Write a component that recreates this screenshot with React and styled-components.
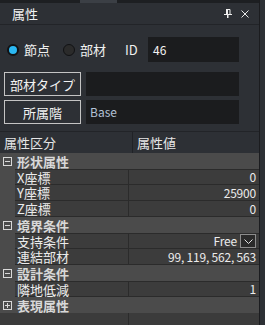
import React from "react";
import styled, { createGlobalStyle } from "styled-components";

const Global = createGlobalStyle`
  html, body { margin: 0; padding: 0; background: #2d3035; }
  * { box-sizing: border-box; }
  body { font-family: "Noto Sans CJK JP", "Noto Sans", sans-serif; line-height: 1; }
`;

const Frame = styled.div`
  width: 265px;
  height: 325px;
  display: flex;
  background: #2d3035;
  overflow: hidden;
`;

const Panel = styled.div`
  width: 259px;
  display: flex;
  flex-direction: column;
`;

const EdgeLine = styled.div`
  width: 1px;
  background: #1b1c1f;
`;

const EdgeStrip = styled.div`
  flex: 1;
  background: #2d3035;
`;

const TopStrip = styled.div`
  height: 3px;
  background: #1d1f22;
  padding-left: 80px;
`;

const TabMark = styled.div`
  width: 37px;
  height: 3px;
  background: #3b3f45;
`;

const TitleBar = styled.div`
  height: 22px;
  display: flex;
  align-items: center;
  padding: 0 10px 0 12px;
  border-bottom: 1px solid #222428;
  color: #f2f2f2;
  font-size: 13px;
`;

const Title = styled.span`
  flex: 1;
`;

const TitleIcons = styled.div`
  display: flex;
  gap: 9px;
  align-items: center;
`;

const Body = styled.div`
  padding: 12px 0 0 0;
  display: flex;
  flex-direction: column;
`;

const RadioRow = styled.div`
  display: flex;
  align-items: center;
  height: 25px;
  padding-left: 7px;
  color: #f0f0f0;
  font-size: 13px;
`;

const RadioLabel = styled.label`
  display: flex;
  align-items: center;
  gap: 5px;
  width: ${(p) => p.$w}px;
`;

const RadioDot = styled.span`
  width: 12px;
  height: 12px;
  border-radius: 50%;
  background: ${(p) => (p.$on ? "#2bb8f2" : "#2b2b2b")};
  border: ${(p) => (p.$on ? "2px" : "1px")} solid #111214;
`;

const IdLabel = styled.span`
  width: 23px;
`;

const Field = styled.div`
  width: ${(p) => p.$w}px;
  height: ${(p) => p.$h}px;
  background: #1b1c1e;
  color: ${(p) => p.$color || "#f4f4f4"};
  font-size: 12px;
  display: flex;
  align-items: center;
  padding-left: ${(p) => p.$pad}px;
`;

const ButtonRow = styled.div`
  display: flex;
  gap: 5px;
  padding-left: 4px;
  margin-top: ${(p) => p.$mt}px;
`;

const Button = styled.div`
  width: 77px;
  height: 24px;
  border: 1px solid #c4c4c4;
  color: #f2f2f2;
  font-size: 13px;
  display: flex;
  align-items: center;
  justify-content: center;
`;

const Grid = styled.div`
  margin-top: 7px;
  border-top: 1px solid #222428;
  display: flex;
  flex-direction: column;
  flex: 1;
`;

const Header = styled.div`
  height: 21px;
  display: grid;
  grid-template-columns: 132px 1px 1fr;
  color: #e6e6e6;
  font-size: 13px;
  align-items: center;
`;

const HeaderCell = styled.span`
  padding-left: 4px;
`;

const HeaderDivider = styled.div`
  align-self: stretch;
  background: #202226;
`;

const GroupRow = styled.div`
  height: 16px;
  flex-shrink: 0;
  display: flex;
  align-items: center;
  gap: 2px;
  background: #4b4b4b;
  color: #d8d8d8;
  font-weight: bold;
  font-size: 13px;
`;

const Toggle = styled.span`
  width: 15px;
  display: flex;
  justify-content: center;
`;

const PropRow = styled.div`
  height: 16px;
  flex-shrink: 0;
  display: flex;
  background: #4b4b4b;
`;

const Margin = styled.div`
  width: 15px;
`;

const Cells = styled.div`
  flex: 1;
  display: grid;
  grid-template-columns: 113px 1fr;
  column-gap: 1px;
  background: #2b2b2b;
  padding-top: ${(p) => (p.$first ? 1 : 0)}px;
  padding-bottom: 1px;
`;

const NameCell = styled.div`
  background: #3c3c3c;
  color: #ececec;
  font-size: 13px;
  padding-left: 2px;
  display: flex;
  align-items: center;
`;

const ValueCell = styled.div`
  background: #3c3c3c;
  color: #ececec;
  font-size: 12px;
  padding-right: 3px;
  display: flex;
  align-items: center;
  justify-content: flex-end;
  gap: 3px;
  letter-spacing: -0.2px;
`;

const Combo = styled.span`
  width: 16px;
  height: 14px;
  border: 1px solid #8c8c8c;
  background: #2a2a2a;
  display: flex;
  align-items: center;
  justify-content: center;
`;

const Filler = styled.div`
  flex: 1;
  display: grid;
  grid-template-columns: 128px 1px 1fr;
  background: #3b3b3b;
`;

const FillerLine = styled.div`
  background: #2b2b2b;
`;

const PinIcon = () => (
  <svg width="8" height="9" viewBox="0 0 8 9">
    <path d="M2 0.5H6V5M2.5 0.5V5" stroke="#f0f0f0" strokeWidth="1" fill="none" />
    <rect x="2" y="1" width="2" height="4" fill="#f0f0f0" />
    <rect x="0" y="5" width="8" height="1" fill="#f0f0f0" />
    <rect x="3" y="6" width="1.5" height="3" fill="#f0f0f0" />
  </svg>
);

const CloseIcon = () => (
  <svg width="8" height="8" viewBox="0 0 8 8">
    <path d="M0.5 0.5L7.5 7.5M7.5 0.5L0.5 7.5" stroke="#e8e8e8" strokeWidth="1" />
  </svg>
);

const BoxIcon = ({ open }) => (
  <svg width="9" height="9" viewBox="0 0 9 9">
    <rect x="0.5" y="0.5" width="8" height="8" fill="none" stroke="#d8d8d8" />
    <rect x="2" y="4" width="5" height="1" fill="#d8d8d8" />
    {!open && <rect x="4" y="2" width="1" height="5" fill="#d8d8d8" />}
  </svg>
);

const Chevron = () => (
  <svg width="9" height="5" viewBox="0 0 9 5">
    <path d="M0.5 0.5L4.5 4.5L8.5 0.5" stroke="#e0e0e0" fill="none" />
  </svg>
);

const rows = [
  { group: "形状属性", open: true },
  { name: "X座標", value: "0" },
  { name: "Y座標", value: "25900" },
  { name: "Z座標", value: "0" },
  { group: "境界条件", open: true },
  { name: "支持条件", value: "Free", combo: true },
  { name: "連結部材", value: "99, 119, 562, 563" },
  { group: "設計条件", open: true },
  { name: "隣地低減", value: "1" },
  { group: "表現属性", open: false },
];

export default function App() {
  return (
    <>
      <Global />
      <Frame>
        <Panel>
          <TopStrip>
            <TabMark />
          </TopStrip>
          <TitleBar>
            <Title>属性</Title>
            <TitleIcons>
              <PinIcon />
              <CloseIcon />
            </TitleIcons>
          </TitleBar>
          <Body>
            <RadioRow>
              <RadioLabel $w={56}>
                <RadioDot $on />
                節点
              </RadioLabel>
              <RadioLabel $w={62}>
                <RadioDot />
                部材
              </RadioLabel>
              <IdLabel>ID</IdLabel>
              <Field $w={91} $h={25} $pad={5} $color="#f4f4f4">46</Field>
            </RadioRow>
            <ButtonRow $mt={10}>
              <Button>部材タイプ</Button>
              <Field $w={153} $h={24} $pad={4} />
            </ButtonRow>
            <ButtonRow $mt={4}>
              <Button>所属階</Button>
              <Field $w={153} $h={24} $pad={4} $color="#b4c2d6">Base</Field>
            </ButtonRow>
          </Body>
          <Grid>
            <Header>
              <HeaderCell>属性区分</HeaderCell>
              <HeaderDivider />
              <HeaderCell>属性値</HeaderCell>
            </Header>
            {rows.map((r, i) =>
              r.group ? (
                <GroupRow key={i}>
                  <Toggle>
                    <BoxIcon open={r.open} />
                  </Toggle>
                  {r.group}
                </GroupRow>
              ) : (
                <PropRow key={i}>
                  <Margin />
                  <Cells $first={!!rows[i - 1].group}>
                    <NameCell>{r.name}</NameCell>
                    <ValueCell>
                      {r.value}
                      {r.combo && (
                        <Combo>
                          <Chevron />
                        </Combo>
                      )}
                    </ValueCell>
                  </Cells>
                </PropRow>
              )
            )}
            <Filler>
              <div />
              <FillerLine />
              <div />
            </Filler>
          </Grid>
        </Panel>
        <EdgeLine />
        <EdgeStrip />
      </Frame>
    </>
  );
}
